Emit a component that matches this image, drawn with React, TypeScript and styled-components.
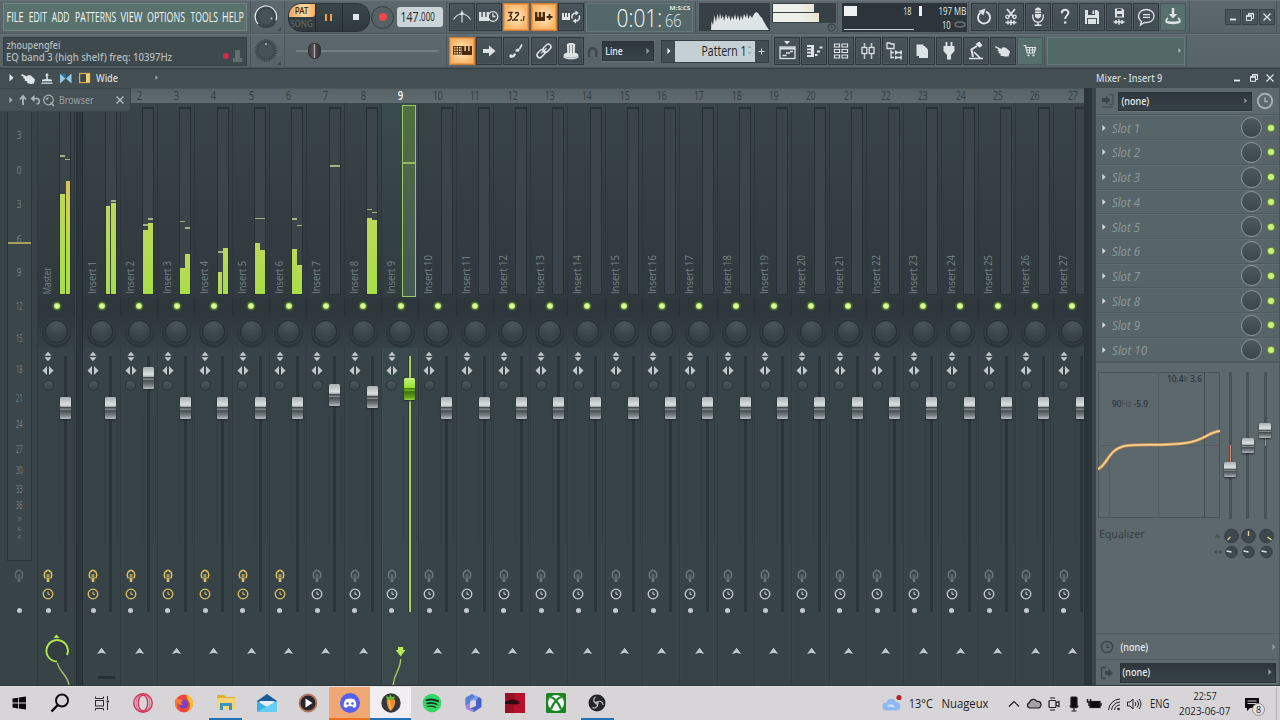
import { ReactNode, useLayoutEffect, useRef, useState } from "react";
import styled, { createGlobalStyle, css } from "styled-components";

const GlobalStyle = createGlobalStyle`
  * { box-sizing: border-box; }
  body {
    margin: 0;
    width: 1280px;
    height: 720px;
    overflow: hidden;
    background: #384347;
    font-family: "Open Sans", "Noto Sans", sans-serif;
    color: #dfe6e8;
  }
  svg { display: block; flex: none; }
`

/* ---------- text that is squeezed to a given length ---------- */

const FitBox = styled.span<{ $w: number; $vertical?: boolean }>`
  display: inline-flex;
  flex: none;
  align-items: center;
  justify-content: center;
  white-space: pre;
  ${p => p.$vertical ? css`height: ${p.$w}px; width: 12px;` : css`width: ${p.$w}px;`}
`

const FitText = styled.span<{ $vertical?: boolean }>`
  flex: none;
  display: block;
  ${p => p.$vertical && css`writing-mode: vertical-rl;`}
`

function Fit({ w, vertical, children }: { w: number; vertical?: boolean; children: ReactNode }) {
    const ref = useRef<HTMLSpanElement>(null);
    const [scale, setScale] = useState(1);
    useLayoutEffect(() => {
        if (!ref.current) return;
        const size = vertical ? ref.current.offsetHeight : ref.current.offsetWidth;
        if (size) setScale(w / size);
    }, [w, vertical, children]);
    return (
        <FitBox $w={w} $vertical={vertical}>
            <FitText
                ref={ref}
                $vertical={vertical}
                style={{ transform: vertical ? `rotate(180deg) scaleY(${scale})` : `scaleX(${scale})` }}
            >
                {children}
            </FitText>
        </FitBox>
    );
}

/* ---------- toolbar ---------- */

const Screen = styled.div`
  width: 1280px;
  height: 720px;
  display: flex;
  flex-direction: column;
`

const Bar = styled.div`
  height: 34px;
  display: flex;
  background: linear-gradient(#5d686c, #586367);
  border-top: 1px solid #68737a;
  border-bottom: 1px solid #4b565a;
`

const Section = styled.div<{ $w: number; $pl?: number; $gap?: number }>`
  width: ${p => p.$w}px;
  flex: none;
  display: flex;
  align-items: center;
  gap: ${p => p.$gap ?? 0}px;
  padding-left: ${p => p.$pl ?? 0}px;
  border-right: 1px solid #4c575b;
`

const MenuPanel = styled.div`
  width: 244px;
  height: 28px;
  padding: 0 0 1px 3px;
  display: flex;
  align-items: center;
  gap: 4.9px;
  background: #5a726e;
  border: 1px solid #6e8582;
  font-size: 14px;
  color: #f1f6f6;
`

const HintPanel = styled.div`
  width: 244px;
  height: 29px;
  padding: 0 3px 0 2px;
  display: flex;
  align-items: center;
  justify-content: space-between;
  background: #3e494d;
  border: 1px solid #353f43;
  font-family: "Noto Sans", sans-serif;
  font-size: 10.5px;
  line-height: 12px;
`

const HintLines = styled.div`
  display: flex;
  flex-direction: column;
  color: #e8eeef;
  font-weight: 500;
  span:first-child { color: #b4bdc0; }
  span + span, span + span > span { color: #e8eeef; }
`

const HintIcons = styled.div`
  display: flex;
  align-items: center;
  gap: 3px;
  padding-top: 9px;
`

const RecDot = styled.div`
  width: 6px;
  height: 6px;
  border-radius: 50%;
  background: #d3294b;
`

const Transport = styled.div`
  width: 82px;
  height: 29px;
  display: flex;
  overflow: hidden;
  border-radius: 13px;
  border: 1px solid #2a3337;
  background: linear-gradient(#3a464a, #2f393d);
`

const PatSong = styled.div`
  width: 26px;
  display: flex;
  flex-direction: column;
  font-family: "Noto Sans", sans-serif;
  font-size: 8px;
  line-height: 13px;
  text-align: center;
`

const Pat = styled.div`
  height: 13px;
  background: linear-gradient(90deg, #f1a75c, #ffd9a0 60%, #f7ae62);
  color: #2b1d0c;
  font-weight: 500;
  border-radius: 0 0 3px 0;
`

const Song = styled.div`
  color: #616c70;
`

const TransportButton = styled.div`
  flex: 1;
  display: flex;
  align-items: center;
  justify-content: center;
  border-left: 1px solid #232c2f;
`

const PauseMark = styled.div`
  width: 7px;
  height: 7px;
  border: solid #f1a04f;
  border-width: 0 2px;
`

const StopMark = styled.div`
  width: 6px;
  height: 6px;
  background: #e1e6e8;
`

const Record = styled.div`
  width: 23px;
  height: 23px;
  margin-left: 1.5px;
  border-radius: 50%;
  display: flex;
  align-items: center;
  justify-content: center;
  background: #566065;
  border: 1.5px solid #343f43;
  &::after {
    content: "";
    width: 8px;
    height: 8px;
    border-radius: 50%;
    background: #f0464f;
  }
`

const Tempo = styled.div`
  width: 46px;
  height: 20px;
  margin-left: 2.5px;
  padding: 0 0 1px 4px;
  display: flex;
  align-items: center;
  border-radius: 3px;
  background: #cbd4d7;
  color: #22292c;
  font-size: 14.5px;
  small { font-size: 12px; }
`

const ToolButton = styled.div<{ $tone?: "orange" | "teal" }>`
  width: 26px;
  height: 28px;
  flex: none;
  display: flex;
  align-items: center;
  justify-content: center;
  color: #dde3e5;
  background: linear-gradient(#48545a, #414c50);
  border: 1px solid #2e383c;
  box-shadow: inset 0 0 0 1px #4b565a;
  ${p => p.$tone === "orange" && css`
    color: #4a2a0a;
    background: radial-gradient(#ffe0b0 15%, #f9b468 75%);
    border-color: #cf7f36;
    box-shadow: inset 0 0 0 1px #f09a4c;
  `}
  ${p => p.$tone === "teal" && css`
    background: #58706d;
    border-color: #465857;
    box-shadow: none;
  `}
`

const TimePanel = styled.div`
  width: 107px;
  height: 29px;
  display: flex;
  align-items: flex-start;
  justify-content: flex-end;
  padding-right: 2px;
  background: #54686a;
  border: 1px solid #667779;
`

const TimeMain = styled.div`
  margin-right: 3px;
  font-size: 25px;
  line-height: 26px;
  font-weight: 300;
  color: #f4f8f8;
`

const TimeSide = styled.div`
  display: flex;
  flex-direction: column;
  font-size: 5.5px;
  line-height: 6px;
  font-weight: 700;
  align-items: flex-end;
  padding-top: 1px;
  div {
    font-size: 18px;
    line-height: 18px;
    font-weight: 300;
    padding-right: 8px;
  }
`

const Scope = styled.div`
  width: 71px;
  height: 28px;
  background: #374145;
`

const LevelColumn = styled.div`
  width: 64px;
  height: 29px;
  margin-left: 2px;
  display: flex;
  flex-direction: column;
  align-items: flex-end;
`

const Levels = styled.div`
  width: 64px;
  height: 20px;
  padding: 1px;
  display: flex;
  flex-direction: column;
  gap: 1px;
  background: #374145;
`

const Level = styled.div<{ $w: number }>`
  width: ${p => p.$w}px;
  height: 8.5px;
  background: linear-gradient(90deg, #eef0ea 60%, #e8e4d2);
`

const CpuPanel = styled.div`
  width: 125px;
  height: 29px;
  display: flex;
  justify-content: space-between;
  padding: 1px 1px 1px 2px;
  background: #2c3539;
  color: #e4eaec;
  font-size: 11px;
  line-height: 13px;
`

const CpuLeft = styled.div`
  width: 70px;
  height: 26px;
  display: flex;
  flex-direction: column;
  border-bottom: 1px solid #cdd4d6;
`

const CpuTop = styled.div`
  display: flex;
  justify-content: space-between;
  padding-right: 2px;
`

const CpuBlock = styled.div`
  width: 13px;
  height: 10px;
  margin-top: 2px;
  background: #eef1f2;
`

const CpuMark = styled.div`
  width: 3px;
  height: 10px;
  margin: 2px 0 0 2px;
  background: #eef1f2;
`

const CpuRight = styled.div`
  width: 42px;
  display: flex;
  flex-direction: column;
  align-items: flex-end;
`

const CpuLine = styled.div`
  display: flex;
  align-items: center;
  gap: 3px;
  margin-bottom: 1px;
`

const WindowButtons = styled.div`
  display: flex;
  gap: 1px;
  margin: 0 0 0 35px;
`

const WindowButton = styled.div`
  width: 16px;
  height: 16px;
  display: flex;
  align-items: center;
  justify-content: center;
  background: #485358;
  border: 1px solid #364145;
`

const SongSlider = styled.div`
  width: 142px;
  height: 2px;
  background: #757f82;
  position: relative;
`

const SliderThumb = styled.div`
  position: absolute;
  left: 12px;
  top: -7px;
  width: 13px;
  height: 16px;
  border-radius: 6px 6px 7px 7px;
  background: linear-gradient(90deg, #3c373b, #5a5257 40%, #b3adb0 50%, #4a4348 60%, #312e32);
  border: 1px solid #2b3033;
`

const DarkSelect = styled.div<{ $w: number; $h: number }>`
  width: ${p => p.$w}px;
  height: ${p => p.$h}px;
  padding: 0 3px 1px 2px;
  display: flex;
  align-items: center;
  justify-content: space-between;
  background: linear-gradient(#2e383c, #384347);
  border: 1px solid #2a3337;
  box-shadow: 0 1px 0 #6b7679;
  font-family: "Noto Sans", sans-serif;
  font-size: 10px;
  font-weight: 500;
  line-height: 14px;
  color: #e6ecee;
`

const PatternBox = styled.div`
  margin-left: 6px;
  height: 23px;
  display: flex;
  border: 1px solid #323d41;
`

const PatternName = styled.div`
  width: 80px;
  padding: 0 2px 2px 0;
  display: flex;
  align-items: center;
  justify-content: flex-end;
  background: #c5d0d5;
  color: #1c2326;
  font-size: 14px;
`

const PatternSide = styled.div`
  width: 13px;
  display: flex;
  align-items: center;
  justify-content: center;
  background: #434e52;
`

const TealPanel = styled.div`
  width: 138px;
  height: 28px;
  padding-right: 3px;
  display: flex;
  align-items: center;
  justify-content: flex-end;
  background: #536967;
  border: 1px solid #667b79;
`

const TinyArrow = ({ color = "#8f9a9d", size = 4 }: { color?: string; size?: number }) => (
    <svg width={size} height={size * 1.5} viewBox="0 0 4 6"><path d="M0.4 0L3.6 3L0.4 6z" fill={color} /></svg>
)

const Icon = ({ children, w = 20, h = 20 }: { children: ReactNode; w?: number; h?: number }) => (
    <svg width={w} height={h} viewBox={`0 0 ${w} ${h}`} fill="none" stroke="currentColor" strokeWidth="1.3">{children}</svg>
)

const solid = { fill: "currentColor", stroke: "none" };
const PIANO = "M0 0h2.4v5h1.4V0h2.4v5h1.4V0H10v9H0z";

const icons = {
    metronome: <Icon><path d="M1.5 12.5C4 8.500 7 7 10 7s6 1.500 8.500 5.500M10 15.500V6" strokeWidth="1.100" /><path d="M10 3l1.800 4L10 8.500 8.200 7z" {...solid} /></Icon>,
    waitInput: <Icon><path d={PIANO} transform="translate(0 5)" {...solid} /><circle cx="14" cy="9.500" r="4.800" fill="#454f54" /><path d="M14 6.500v3h2.500" /></Icon>,
    countdown: <Icon><path d="M2 5.500h4L4 9c2.500 0 2 4.500-2.500 4.500M9 6.500c1-1.500 4-1.500 3.500.500-.300 1.500-4 4-4.500 6h4" strokeWidth="1.400" /><path d="M6 12.500h1.500v1.400H6zM14.500 12.500h1.300v1.400h-1.300z" {...solid} /><path d="M18 9l-.700 5" strokeWidth="1.200" /></Icon>,
    overdub: <Icon><path d={PIANO} transform="translate(1 5)" {...solid} /><path d="M12.500 10h6M15.500 7v6" strokeWidth="1.800" /></Icon>,
    loopRecord: <Icon><path d="M1 6h2v4h1V6h2v4h1V6h2v7H1z" {...solid} /><path d="M11.500 11.500a3.600 3.600 0 0 1 4-5.300M18 8.500a3.600 3.600 0 0 1-4 5.300" strokeWidth="1.500" /><path d="M14.500 3.500l3.300 2.600-3.300 2.400zM15 11.500l-3.300 2.500 3.300 2.500z" {...solid} /></Icon>,
    undo: <Icon><path d="M6.300 5.800A6 6 0 1 0 12 4.800" strokeWidth="2" /><path d="M11.500 1.500L4.500 4l5 4.500z" {...solid} /></Icon>,
    cut: <Icon><path d="M6 2l6.500 8M14 2l-6.500 8" strokeWidth="1.800" /><circle cx="6.500" cy="9.800" r="1.700" /><circle cx="13.500" cy="9.800" r="1.700" /><path d="M4.500 15.500h11M7 13.500v4M10 12.800v5.400M13 13.500v4" strokeWidth="1.500" /></Icon>,
    mic: <Icon><rect x="7" y="0.500" width="6" height="11" rx="3" {...solid} /><path d="M7 4h6M7 6.500h6" stroke="#454f54" strokeWidth=".8" /><path d="M4.800 7.500v2.800a5.200 4.800 0 0 0 10.400 0V7.500M10 15v3M6.500 18.300h7" strokeWidth="1.400" /></Icon>,
    help: <Icon><path d="M6.800 6.200c0-4.800 6.600-4.500 6.600-.500 0 2.600-3.200 2.900-3.200 6.300" strokeWidth="2" /><circle cx="10.200" cy="15.500" r="1.300" {...solid} /></Icon>,
    save: <Icon><path d="M3 3h12l2 2v12H3z" {...solid} /><path d="M6 3h7v5H6zM5 11h10v6H5z" fill="#454f54" stroke="none" /><path d="M10.500 3.500h1.700V7h-1.700zM6 12h8v5H6z" {...solid} /></Icon>,
    saveAs: <Icon><path d="M6 1.500h7.500L15 3v7.500H6z" {...solid} /><path d="M8 2h4.500v2H8zM8 7h5v2.500H8z" fill="#454f54" stroke="none" /><path d="M4.500 15h11M7 13v4M10 12.300v5.400M13 13v4" strokeWidth="1.500" /></Icon>,
    chat: <Icon><path d="M5.500 14.500L4.500 18l4-2.600c6 .8 9.500-2.200 9.500-6.400 0-3.800-3.500-6.500-7.700-6.500S2.500 5.200 2.500 9c0 2.300 1 4.200 3 5.500z" /><path d="M7 7.700h7M7 10.300h7" /></Icon>,
    export: <Icon><path d="M8.800 1h2.400v6h3L10 11.500 5.800 7h3z" {...solid} /><path d="M5 11c-1.500 1-2 2-2 3M15 11c1.500 1 2 2 2 3" strokeWidth="1.600" /><path d="M2.500 13c4 2 11 2 15 0v2.500c-3 2.200-12 2.200-15 0z" {...solid} /></Icon>,
    typing: <Icon><path d={PIANO} transform="translate(10 5)" {...solid} /><path d="M1 5.500h8.500M1 8h8.500M1 10.500h8.500M1 13h8.500M1.500 5v8.500M4 5v8.500M6.500 5v8.500M9 5v8.500" strokeWidth=".9" /></Icon>,
    arrow: <Icon><path d="M4 8h6V4.500l6.500 5.500L10 15.500V12H4z" {...solid} /></Icon>,
    slide: <Icon><path d="M4.500 15.500c3 .500 4-1 4.500-3M9.500 9.500h3" strokeWidth="2.200" /><circle cx="5" cy="15" r="1.700" {...solid} /><circle cx="12" cy="9" r="1.600" {...solid} /><path d="M13.500 8l2.500-4.500" strokeWidth="1.600" /></Icon>,
    link: <Icon><rect x="8.500" y="4.500" width="9" height="5.400" rx="2.700" transform="rotate(-45 13 7.200)" strokeWidth="1.500" /><rect x="2.500" y="10" width="9" height="5.400" rx="2.700" transform="rotate(-45 7 12.700)" strokeWidth="1.500" /><path d="M7.500 12.300l5-5" /></Icon>,
    hat: <Icon><ellipse cx="10" cy="14" rx="7.500" ry="2.800" {...solid} /><path d="M5.800 3c2-1.500 6.400-1.500 8.400 0l-.5 10H6.300z" {...solid} /><path d="M8.500 4v8M11.500 4v8" stroke="#7b8589" strokeWidth=".9" /><path d="M2.500 15.500c3 2.800 12 2.800 15 0" strokeWidth="1.500" /></Icon>,
    playlist: <Icon><path d="M7 0h6l-3 3.500z" {...solid} /><rect x="3" y="6" width="15" height="11.500" /><path d="M3 7.500h15" strokeWidth="2" /><path d="M5.500 14.500h4M9 12h4M13 10.500h3" strokeWidth="1.600" /></Icon>,
    pianoRoll: <Icon><path d="M3 4h7v12H3v-2h4v-1.500H3v-1.800h4V9.300H3V7.500h4V6H3z" {...solid} /><path d="M11 14h2.500M13 10.500h3M15.500 6.500h3" strokeWidth="2.200" /></Icon>,
    rack: <Icon><path d="M3.500 3h5v3h-5zM3.500 8.500h5v3h-5zM3.500 14h5v3h-5zM11 3h5.500v3H11zM11 8.500h5.500v3H11zM11 14h5.500v3H11z" strokeWidth="1.200" /></Icon>,
    mixer: <Icon><path d="M6.500 2v4.500M6.500 12.500V18M13.500 2v4.500M13.500 12.500V18" strokeWidth="1.600" opacity=".8" /><rect x="4" y="6.500" width="4.800" height="6" /><rect x="11.200" y="6.500" width="4.800" height="6" /></Icon>,
    tree: <Icon><path d="M2 2h3l1 1h3v4.500H2zM6 9v8.500M6 11.500h3M6 16.500h3" /><path d="M10 9l3.500 2.500L10 14zM10 14.500l3.500 2-3.500 2z" {...solid} /><path d="M12 11.500h5M12 16.500h5M16 9.500v4M16 14.500v4" strokeWidth="1.500" /></Icon>,
    docs: <Icon><path d="M4.500 3.500h7V6h-4v9h-3z" {...solid} /><path d="M7 5h5.500L16 8.500V17H7z" {...solid} /></Icon>,
    plug: <Icon><path d="M7.500 1v4M12.500 1v4" strokeWidth="1.800" /><path d="M4.500 5h11v5l-3.500 4v4.500H8V14l-3.500-4z" {...solid} /></Icon>,
    lamp: <Icon><path d="M11 5L5.500 8.500 7 16" strokeWidth="2" /><path d="M9.500 3l4-2.500 3 4-3 2.300z" {...solid} /><path d="M3 17.500h14M8 11l6.500 6.500" strokeWidth="1.700" /></Icon>,
    hand: <Icon><path d="M2.500 5l6 3 1-1.800 3 .3 4.500 4-1.500 5h-4L7 14.500l1-1.500-2.500-1 .5-1.500-1.500-1 1-1.200-3.500-2z" {...solid} /></Icon>,
    cart: <Icon><path d="M3.500 4.500h2l1.800 7.500h7l1.200-5.500H6" strokeWidth="1.200" /><path d="M7 9h8.500M9.500 6.500V12M12.500 6.500V12" strokeWidth="1" /><circle cx="8.500" cy="14.300" r="1.100" {...solid} /><circle cx="13.500" cy="14.300" r="1.100" {...solid} /></Icon>,
}

const MasterKnob = ({ ring }: { ring?: boolean }) => (
    <svg width="33" height="32" viewBox="0 0 33 32">
        <g transform="translate(-.5 -.5)">
            <circle cx="15.5" cy="16" r="10.500" fill="#4c575b" stroke={ring ? "#384246" : "#3a4549"} strokeWidth="2" strokeDasharray={ring ? undefined : "1 1.500"} />
            {ring && <path d="M7.500 23.500A10.800 10.800 0 1 1 25.500 20" fill="none" stroke="#e5eaec" strokeWidth="1.300" />}
            <circle cx="15.500" cy="16" r="8.500" fill="#465155" stroke="#353f43" />
            <circle cx={ring ? 21 : 15.500} cy={ring ? 18 : 9.500} r=".9" fill="#c3cbce" />
        </g>
        <path d="M30 26v4h-4z" fill="#3f4a4e" />
    </svg>
)

const MinIcon = () => <svg width="10" height="10" viewBox="0 0 10 10"><path d="M2 7.500h6" stroke="#e4eaec" strokeWidth="1.800" /></svg>
const RestoreIcon = () => <svg width="10" height="10" viewBox="0 0 10 10" fill="none" stroke="#e4eaec"><path d="M3.500 3.500v-2h5v5h-2" /><rect x="1.500" y="3.800" width="5" height="4.500" /><path d="M1.500 4h5M3.500 1.700h5" strokeWidth="1.500" /></svg>
const CloseIcon = ({ color = "#e4eaec" }: { color?: string }) => <svg width="10" height="10" viewBox="0 0 10 10"><path d="M1.500 1.500l7 7M8.500 1.500l-7 7" stroke={color} strokeWidth="1.200" /></svg>

/* ---------- mixer ---------- */

const TitleBar = styled.div`
  height: 20px;
  padding-bottom: 2px;
  display: flex;
  align-items: center;
  background: #434e52;
  border-top: 1px solid #353f43;
  font-family: "Noto Sans", sans-serif;
  font-size: 10px;
  font-weight: 500;
  line-height: 14px;
  color: #d5dcde;
`

const TitleIcons = styled.div`
  width: 1096px;
  padding-left: 9px;
  display: flex;
  align-items: center;
`

const TitleButtons = styled.div`
  margin-left: 70px;
  display: flex;
  gap: 6.5px;
`

const WideLabel = styled.div`
  margin: 0 37px 0 4px;
  display: flex;
`

const MixerBody = styled.div`
  height: 598px;
  display: flex;
  position: relative;
  background: #384347;
  border-bottom: 1px solid #2e3639;
`

const BrowserTab = styled.div`
  position: absolute;
  left: 0;
  top: 0;
  width: 131px;
  height: 24px;
  padding: 0 5px 0 9px;
  display: flex;
  align-items: center;
  gap: 2px;
  background: #465156;
  border-radius: 0 0 5px 0;
  border: 1px solid #3a4549;
  border-left: none;
  font-family: "Noto Sans", sans-serif;
  font-size: 10px;
  color: #98a2a5;
`

const CloseSlot = styled.div`
  margin-left: auto;
`

const ScaleColumn = styled.div`
  width: 38px;
  flex: none;
  padding: 24px 0 0 7px;
  border-right: 1px solid #313b3f;
`

const ScaleBox = styled.div`
  width: 25px;
  height: 449px;
  display: flex;
  flex-direction: column;
  align-items: center;
  position: relative;
  padding-top: 6px;
  background: #3b464a;
  border: 1px solid #2b3539;
  border-top: none;
`

const ScaleLabel = styled.div<{ $gap: number; $small?: boolean }>`
  height: 12px;
  margin-top: ${p => p.$gap}px;
  line-height: 12px;
  color: #798386;
  font-size: ${p => p.$small ? 6 : 11}px;
`

const ScaleLine = styled.div`
  position: absolute;
  top: 130px;
  left: 0;
  width: 23px;
  height: 1.5px;
  background: #a7a05c;
`

const ScaleFoot = styled.div`
  width: 24px;
  display: flex;
  flex-direction: column;
  align-items: center;
  padding-top: 8px;
  gap: 25px;
`

const Divider = styled.div`
  width: 7.4px;
  flex: none;
  margin-left: .5px;
  background: #2d373b;
  border-left: 1px solid #293236;
  border-right: 1px solid #242d31;
`

const Strips = styled.div`
  width: 1000.8px;
  flex: none;
  display: flex;
  overflow: hidden;
`

const StripBox = styled.div<{ $selected?: boolean }>`
  flex: 0 0 37.33px;
  display: flex;
  flex-direction: column;
  background: ${p => p.$selected ? "#3a4a4c" : "#384347"};
  box-shadow: inset -1px 0 0 #323c40, inset 1px 0 0 ${p => p.$selected ? "#3e4d4f" : "#3a4549"};
`

const RulerCell = styled.div<{ $selected?: boolean }>`
  height: 15px;
  padding-bottom: 1px;
  display: flex;
  align-items: center;
  justify-content: center;
  background: linear-gradient(#566266, #616c70);
  border-top: 1px solid #4b565a;
  color: ${p => p.$selected ? "#f2f6f7" : "#333d41"};
  font-size: 12px;
  font-weight: ${p => p.$selected ? 600 : 400};
`

const MeterZone = styled.div<{ $selected?: boolean }>`
  height: 194px;
  padding: 4px 4px 2px 4px;
  display: flex;
  justify-content: space-between;
  align-items: flex-end;
  background: ${p => p.$selected
    ? "linear-gradient(#3a4b4d, #303b3e)"
    : "linear-gradient(#394448, #30393d)"};
  box-shadow: inset -1px 0 0 #2d373b;
  color: #788386;
  font-size: 11px;
  line-height: 12px;
`

const LabelSlot = styled.div`
  margin: 0 0 1px -1px;
  display: flex;
`

const MeterBox = styled.div<{ $selected?: boolean }>`
  width: 12px;
  height: 188px;
  display: flex;
  align-items: flex-end;
  justify-content: center;
  gap: .5px;
  position: relative;
  background: #3b4549;
  border: 1px solid #283135;
  border-top-width: 2px;
  ${p => p.$selected && css`
    width: 14px;
    height: 192px;
    margin: 0 -1px -2px 0;
    background: linear-gradient(#50703f, #4a6050 60%, #435a52);
    border: 1.5px solid #98c766;
  `}
`

const Channel = styled.div<{ $h: number; $hot?: boolean }>`
  width: 4.8px;
  height: ${p => p.$h}px;
  background: ${p => p.$hot ? "linear-gradient(#d9c257, #c9d551 35%, #aedb4a 60%)" : "linear-gradient(#bcd957, #a8dd48)"};
`

const Peak = styled.div<{ $top: number; $side: "l" | "r"; $wide?: boolean }>`
  position: absolute;
  top: ${p => p.$top}px;
  ${p => p.$side === "l" ? "left: 0" : "right: 0"};
  width: ${p => p.$wide ? 6 : 5}px;
  height: 1.5px;
  background: ${p => p.$wide ? "#98b860" : "#a3b183"};
`

const LedRow = styled.div`
  height: 19px;
  display: flex;
  align-items: center;
  justify-content: center;
  background: #2e383c;
  box-shadow: inset -1px 0 0 #283135;
`

const Led = styled.div`
  width: 6px;
  height: 6px;
  border-radius: 50%;
  background: radial-gradient(#e2ffab 20%, #a5e046);
  box-shadow: 0 0 0 1.5px #4c6a30;
`

const KnobRow = styled.div`
  height: 32px;
  padding-bottom: 1px;
  display: flex;
  align-items: center;
  justify-content: center;
  background: linear-gradient(#2e383c, #364145);
`

const Knob = styled.div`
  width: 23px;
  height: 23px;
  border-radius: 50%;
  background: radial-gradient(circle at 50% 15%, #4b565c, #374246 65%);
  border: 1.5px solid #232d31;
  box-shadow: 0 0 0 2px #323c40, 0 1.5px 0 3px #2b3539;
`

const FaderZone = styled.div`
  height: 272px;
  display: grid;
  grid-template-columns: 20px 15px;
`

const ControlColumn = styled.div`
  display: flex;
  flex-direction: column;
  align-items: center;
  padding-top: 3px;
`

const SepKnob = styled.div`
  width: 11px;
  height: 11px;
  margin: 5px 0 178px;
  border-radius: 50%;
  background: linear-gradient(#4c575b, #3b464a);
  border: 1.5px solid #2b3539;
`

const Dot = styled.div`
  width: 5px;
  height: 5px;
  border-radius: 50%;
  background: #c3cacc;
`

const FaderTrack = styled.div<{ $active?: boolean }>`
  width: 3px;
  height: 256px;
  margin: 8px auto 0;
  position: relative;
  background: #2b3539;
  ${p => p.$active && css`
    background: linear-gradient(90deg, #2b3539 1px, #a3cf59 1px, #a3cf59 2.5px, #2b3539 2.5px);
  `}
  &::before {
    content: "";
    position: absolute;
    top: 60px;
    left: -5px;
    width: 12px;
    height: 126px;
    border: solid #313b3f;
    border-width: 0 1px;
    opacity: .5;
  }
`

const FaderCap = styled.div<{ $active?: boolean; $small?: boolean }>`
  position: absolute;
  left: ${p => p.$small ? -4.5 : -4}px;
  width: ${p => p.$small ? 12 : 11}px;
  height: ${p => p.$small ? 15 : 22}px;
  border-radius: 1.5px;
  background: ${p => p.$active
    ? "linear-gradient(#c8f57d, #94dd2c 45%, #3f7a10 48%, #71b423 56%, #3d7411 62%, #65a51d 90%, #9ad951)"
    : "linear-gradient(#aab1b3, #dadedf 35%, #a0a6a8 45%, #394144 48%, #8b9193 56%, #464e51 62%, #7d8386 85%, #b9bec0)"};
  box-shadow: 0 1px 2px #20282b;
`

const OutputZone = styled.div`
  height: 66px;
  display: flex;
  flex-direction: column;
  align-items: center;
  position: relative;
`

const ScrollThumb = styled.div`
  position: absolute;
  left: 15px;
  bottom: 6px;
  width: 17px;
  height: 3px;
  background: #262f33;
`

type Track = {
    name: string;
    len: number;
    l?: number;
    r?: number;
    pl?: number;
    pr?: number;
    cap?: number;
    lit?: boolean;
    selected?: boolean;
}

// meter levels and peaks are given as screen heights, the meters end at 294
const levels: Record<number, Partial<Track>> = {
    1: { l: 205.500, r: 203, pr: 200, lit: true },
    2: { l: 230, r: 223, pl: 224, pr: 218, cap: 367, lit: true },
    3: { l: 268, r: 254, pl: 220.500, pr: 227, lit: true },
    4: { l: 272, r: 247.500, pl: 251, lit: true },
    5: { l: 243, r: 249.500, pl: 217.500, pr: 217.500, lit: true },
    6: { l: 248.500, r: 264.500, pl: 218, pr: 224.500, lit: true },
    7: { pl: 165, pr: 165, cap: 384 },
    8: { l: 217.500, r: 220, pl: 208.500, pr: 211.500, cap: 386 },
    9: { pl: 163, pr: 163, cap: 378, selected: true },
}

const tracks: Track[] = Array.from({ length: 27 }, (_, i) => ({
    name: `Insert ${i + 1}`,
    len: i < 9 ? 33 : 39,
    ...levels[i + 1],
}))

const master: Track = { name: "Master", len: 27, l: 194, r: 181.5, pl: 155.5, pr: 159, lit: true };

const UpDown = () => (
    <svg width="10" height="11" viewBox="0 0 10 11"><path d="M5 .8L8.500 4.700h-7zM5 10.200L1.500 6.300h7z" fill="#c3cacc" /></svg>
)

const LeftRight = () => (
    <svg width="12" height="10" viewBox="0 0 12 10"><path d="M.5 5.500L5 1v9zM11.500 5.500L7 1v9z" fill="#c3cacc" /></svg>
)

const Spacer = styled.div<{ $h: number }>`
  flex: none;
  height: ${p => p.$h}px;
`

const Plug = ({ color }: { color: string }) => (
    <svg width="10" height="14" viewBox="0 0 10 14">
        <path d="M2.500 9.500C.8 8 .8 3.500 3 2M7.500 9.500C9.200 8 9.200 3.500 7 2M3 3C3.500.8 6.500.8 7 3" fill="none" stroke={color} strokeWidth="1.500" />
        <path d="M3.500 5h3v5.500h-3z" fill={color} opacity=".65" />
        <path d="M5 9.500V13" stroke={color} strokeWidth="2.600" />
    </svg>
)

const Clock = ({ color, size = 12 }: { color: string; size?: number }) => (
    <svg width={size} height={size} viewBox="0 0 12 12" fill="none" stroke={color}>
        <circle cx="6" cy="6" r="4.800" strokeWidth="1.300" />
        <path d="M6 3.500V6.300h2" />
    </svg>
)

function Strip({ track, index }: { track: Track; index?: number }) {
    const { selected, l, r, pl, pr, lit } = track;
    const origin = selected ? 107 : 109;
    return (
        <StripBox $selected={selected}>
            <RulerCell $selected={selected}>
                {index && <Fit w={index > 9 ? 10 : 5.5}>{index}</Fit>}
            </RulerCell>
            <MeterZone $selected={selected}>
                <LabelSlot><Fit w={track.len} vertical>{track.name}</Fit></LabelSlot>
                <MeterBox $selected={selected}>
                    {l && <Channel $h={294 - l} $hot={l < 190} />}
                    {r && <Channel $h={294 - r} $hot={r < 190} />}
                    {pl && <Peak $top={pl - origin} $side="l" $wide={selected} />}
                    {pr && <Peak $top={pr - origin} $side="r" $wide={selected} />}
                </MeterBox>
            </MeterZone>
            <LedRow><Led /></LedRow>
            <KnobRow><Knob /></KnobRow>
            <FaderZone>
                <ControlColumn>
                    <UpDown />
                    <Spacer $h={3} />
                    <LeftRight />
                    <SepKnob />
                    <Plug color={lit ? "#dcc065" : "#6c777a"} />
                    <Spacer $h={5} />
                    <Clock color={lit ? "#dcc063" : "#c3cacc"} />
                    <Spacer $h={8} />
                    <Dot />
                </ControlColumn>
                <FaderTrack $active={selected}>
                    <FaderCap $active={selected} style={{ top: (track.cap ?? 397) - 356 }} />
                </FaderTrack>
            </FaderZone>
            <OutputZone>
                {index === undefined ? (
                    <svg width="37" height="66" viewBox="0 0 37 66">
                        <path d="M15.500 19l3-3.500 3 3.500z" fill="#b3e552" />
                        <circle cx="18.600" cy="32" r="10" fill="#333e42" stroke="#2a3438" strokeWidth="1" />
                        <path d="M19 42.500A10.700 10.700 0 1 1 29 36" fill="none" stroke="#b0e84f" strokeWidth="1.900" />
                        <path d="M19.500 44c1 8 10 12 11.500 22" fill="none" stroke="#a9bd6d" strokeWidth="1.400" />
                    </svg>
                ) : selected ? (
                    <svg width="37" height="66" viewBox="0 0 37 66">
                        <path d="M16 28h5.200v3h2.300L18.600 37.500l-4.900-6.500H16z" fill="#b3ec53" />
                        <path d="M18.600 40c0 11-6 13-7.500 26" fill="none" stroke="#a9cc5c" strokeWidth="1.400" />
                    </svg>
                ) : (
                    <svg width="37" height="66" viewBox="0 0 37 66"><path d="M14 35l4.600-6.200 4.600 6.200-4.600-1.300z" fill="#c3cacc" /></svg>
                )}
                {index === 1 && <ScrollThumb />}
            </OutputZone>
        </StripBox>
    );
}

const scale: [string, number][] = [
    ["3", 135], ["0", 170], ["3", 204], ["6", 239], ["9", 272], ["12", 306], ["15", 338], ["18", 369],
    ["21", 398], ["24", 424], ["27", 449], ["30", 470], ["33", 489], ["36", 505], ["39", 519], ["42", 529], ["45", 537],
]

/* ---------- right panel ---------- */

const PanelGap = styled.div`
  width: 12px;
  flex: none;
  background: #2b3539;
  border-right: 4px solid #3b464a;
`

const Panel = styled.div`
  flex: 1;
  min-width: 0;
  display: flex;
  flex-direction: column;
  background: #5d686c;
  border-right: 1px solid #4a5559;
`

const PanelHead = styled.div`
  height: 27.5px;
  display: flex;
  align-items: center;
  padding-left: 5px;
  gap: 4px;
  border-bottom: 1px solid #4d585c;
`

const Slot = styled.div`
  height: 24.7px;
  padding: 0 5.5px 0 6px;
  display: flex;
  align-items: center;
  background: #586568;
  border-top: 1px solid #616d70;
  border-bottom: 1px solid #4f5a5e;
  color: #8e9a9d;
  font-size: 13px;
  font-style: italic;
`

const SlotName = styled.div`
  flex: 1;
  padding-left: 6px;
`

const SlotKnob = styled.div`
  width: 21px;
  height: 21px;
  margin-right: 5.5px;
  border-radius: 50%;
  background: linear-gradient(#4d585c, #3c474b);
  border: 1.5px solid #8f999c;
`

const SlotLed = styled.div`
  width: 6px;
  height: 6px;
  border-radius: 50%;
  background: #c9f27f;
  box-shadow: 0 0 0 1px #6f9136;
`

const EqRow = styled.div`
  height: 157.5px;
  padding: 9px 0 0 2px;
  display: flex;
  border-top: 1px solid #4e595d;
`

const EqSliders = styled.div`
  display: flex;
  gap: 14.5px;
  margin-left: 8.5px;
`

const EqTrack = styled.div`
  width: 3px;
  height: 147px;
  position: relative;
  background: #475256;
`

const EqOffset = styled.div<{ $top: number; $h: number }>`
  position: absolute;
  left: 1px;
  top: ${p => p.$top}px;
  width: 1.5px;
  height: ${p => p.$h}px;
  background: #e5856b;
`

const EqFoot = styled.div`
  height: 113.5px;
  padding: 6px 4.5px 0 3px;
  display: flex;
  justify-content: space-between;
  align-items: flex-start;
  font-family: "Noto Sans", sans-serif;
  font-size: 11.5px;
  line-height: 16px;
  color: #343f43;
  svg { margin-top: -2px; }
`

const RouteRow = styled.div`
  height: 26px;
  padding: 0 3px 0 4px;
  display: flex;
  align-items: center;
  gap: 6.5px;
  border-top: 1px solid #505b5f;
  font-family: "Noto Sans", sans-serif;
  font-size: 10px;
  font-weight: 500;
  color: #e6ecee;
`

const Push = styled.div`
  margin-left: auto;
`

const eqBands = [
    { cap: 90, from: 73, h: 20 },
    { cap: 66, from: 0, h: 0 },
    { cap: 51, from: 60, h: 14 },
]

const EqGraph = () => (
    <svg width="122" height="146" viewBox="0 0 122 146" fill="none">
        <rect x=".5" y=".5" width="121" height="145" stroke="#495458" />
        <path d="M0 73.500h122M60.500 0v146M11.500 76v70" stroke="#535e62" />
        <path d="M106.500 0v146" stroke="#424d51" />
        <path d="M0 97C6 95 9 86 15 80C21 74 27 73.500 38 73C52 72.500 72 73.500 88 71C106 69 110 60 122 59" stroke="#d99a4e" strokeWidth="3" />
        <path d="M0 97C6 95 9 86 15 80C21 74 27 73.500 38 73C52 72.500 72 73.500 88 71C106 69 110 60 122 59" stroke="#f4d39a" strokeWidth="1.500" />
        <g fontFamily="Noto Sans" fontSize="9" fontWeight="500" fill="#2a3438">
            <text x="69" y="10" textLength="35" lengthAdjust="spacingAndGlyphs">10.4<tspan fill="#465155">k</tspan> 3.6</text>
            <text x="14" y="35" textLength="36" lengthAdjust="spacingAndGlyphs">90<tspan fill="#465155">Hz</tspan> -5.9</text>
        </g>
    </svg>
)

const EqKnobs = () => (
    <svg width="60" height="36" viewBox="0 0 60 36" fill="none">
        {[16.5, 33.5, 51.5].map((x, i) => (
            <g key={x}>
                <circle cx={x} cy="12" r="6.800" fill="#3e484c" stroke="#343e42" />
                <circle cx={x} cy="28" r="5.800" fill="#3e484c" stroke="#343e42" />
                <path d={["M-1 1L-4 4", "M0 0V-5", "M1 1L5 4"][i]} transform={`translate(${x} 12)`} stroke="#d6cf9c" strokeWidth="1.500" />
                <path d="M0 0L-5 -1" transform={`translate(${x} 28)`} stroke="#dce1e2" strokeWidth="1.400" />
            </g>
        ))}
        <path d="M0 13h5M1 11h3M0 28h7M2 26l-2 2 2 2M5 26l2 2-2 2" stroke="#3c474b" />
    </svg>
)

/* ---------- taskbar ---------- */

const Taskbar = styled.div`
  height: 34px;
  display: flex;
  background: #d8d5d8;
  border-top: 1px solid #e6e3e5;
  color: #1d1d1f;
`

const Apps = styled.div`
  display: flex;
  width: 882.5px;
  margin-left: -1.5px;
`

const AppCell = styled.div<{ $bg?: string; $line?: string; $wide?: boolean }>`
  width: 41.3px;
  flex: none;
  display: flex;
  align-items: center;
  justify-content: center;
  padding-bottom: 1px;
  background: ${p => p.$bg ?? "transparent"};
  position: relative;
  ${p => p.$line && css`
    &::after {
      content: "";
      position: absolute;
      bottom: 0;
      left: ${p.$wide ? 0 : 4}px;
      right: ${p.$wide ? 0 : 4}px;
      height: 2.5px;
      background: ${p.$line};
    }
  `}
`

const Tray = styled.div`
  flex: 1;
  display: flex;
  align-items: center;
  font-size: 12.5px;
`

const TrayIcons = styled.div`
  display: flex;
  gap: 4px;
  margin: 0 8.5px 0 17px;
`

const DateTime = styled.div`
  width: 54px;
  margin-left: 9px;
  display: flex;
  flex-direction: column;
  align-items: center;
  font-size: 11px;
  line-height: 15px;
  padding-bottom: 2px;
`

const TempText = styled.div`
  display: flex;
  gap: 8px;
  margin-left: 6px;
`

const BadgeHost = styled.div`
  margin-left: 13px;
  position: relative;
`

const Badge = styled.div`
  position: absolute;
  left: 7px;
  top: 6px;
  width: 13px;
  height: 13px;
  border-radius: 50%;
  border: 1px solid #908d90;
  background: #e2dfe1;
  font-size: 9px;
  line-height: 11px;
  text-align: center;
`

const TrayEdge = styled.div`
  width: 1px;
  height: 34px;
  margin-left: auto;
  margin-right: 3px;
  background: #b5b2b5;
`

const apps: { bg?: string; line?: string; wide?: boolean; art: ReactNode }[] = [
    { art: <path d="M3.500 5.500L9 4.700V9.600H3.500zM9.800 4.500L17 3.500v6.100H9.800zM3.500 10.400H9v5L3.500 14.600zM9.800 10.400H17v6.100l-7.200-1z" fill="#0b0b0c" /> },
    { art: <g stroke="#0b0b0c" strokeWidth="1.900" fill="none"><circle cx="12" cy="7.500" r="6" /><path d="M7.800 12L1.500 18.500" strokeWidth="2.500" /></g> },
    { art: <g stroke="#2a2a2c" fill="none"><rect x="3.500" y="7.500" width="8" height="5.500" /><path d="M3.500 3.500v2h8v-2M3.500 17.500v-2h8v2M15.500 3v4M15.500 10v7" /><path d="M14.500 8.500h2.500" strokeWidth="2" /></g> },
    { art: <g fill="none" stroke="#d0345c"><circle cx="10" cy="10" r="9.200" strokeWidth="1.500" /><ellipse cx="10" cy="10" rx="4.700" ry="8" strokeWidth="1.400" /><ellipse cx="10" cy="10" rx="7" ry="8.800" strokeWidth=".7" /></g> },
    { art: <g><circle cx="10" cy="10.500" r="9" fill="#f2443f" /><path d="M13 1c3 2 6.500 5.500 6 10-.3 4-3 7.500-7 8.300 5-3.300 5-8 2-12C12.500 5 12.500 3 13 1z" fill="#fbc02e" /><circle cx="9.500" cy="11" r="4.600" fill="#7342c8" /><path d="M1.500 6c3-1 6 .2 8 2-3 0-3 2.500-.5 3-2 2-4.500.5-5-1C2 12 3 15.500 6 17 1 15 0 10 1.500 6z" fill="#fb7a2c" /></g> },
    { line: "#2272b8", art: <g><path d="M1 2h7l2 2h9v12H1z" fill="#e3ac36" /><path d="M1 5h18v11H1z" fill="#f3d573" /><path d="M4 10h12v7h-3v-4H7v4H4z" fill="#3f94bf" /></g> },
    { art: <g><path d="M0 8L10 1l10 7v11H0z" fill="#1a5a96" /><path d="M2.500 8h15v6h-15z" fill="#e7f0f6" /><path d="M0 8l10 6 10-6v11H0z" fill="#38b1e4" /><path d="M0 19L20 8v11z" fill="#64cdf1" /></g> },
    { art: <g><circle cx="10" cy="10" r="8.500" fill="#2b2530" stroke="#b4785d" strokeWidth="1.800" /><path d="M7.500 5.500l7 4.500-7 4.500z" fill="#fff" /></g> },
    { bg: "#efa873", line: "#f0701f", wide: true, art: <g><circle cx="10" cy="10" r="10" fill="#5661e6" /><path d="M5.500 6.500c3-1.500 6-1.500 9 0 1.500 2.500 2 4.500 1.800 7-1 .9-2 1.200-3 1.300l-.9-1.500H7.600l-.9 1.500c-1-.1-2-.4-3-1.300-.2-2.500.3-4.500 1.800-7z" fill="#fff" /><circle cx="7.500" cy="10.500" r="1.300" fill="#5661e6" /><circle cx="12.500" cy="10.500" r="1.300" fill="#5661e6" /></g> },
    { bg: "#f0eef0", line: "#2272b8", wide: true, art: <g><circle cx="10" cy="10" r="9.700" fill="#34383a" /><path d="M6 6.500c2-1.500 6-1.500 8 .5 1 3-1.500 9-4.500 11-2.500-2.500-4.500-8-3.500-11.500z" fill="#f38b2a" /><path d="M8 7c.5 3 1 6 1.500 9" stroke="#fcc25c" strokeWidth="1.500" /><path d="M5 3l3 1 1.500-2.500L11 4l3-.5-1.500 4L9 6.500 6 7z" fill="#67b63b" /></g> },
    { art: <g fill="none" stroke="#17301f" strokeLinecap="round"><circle cx="10" cy="10" r="9.300" fill="#33d667" stroke="none" /><path d="M4.500 7.200c4-1.200 8-.8 11.500 1" strokeWidth="1.900" /><path d="M5 10.400c3.500-1 6.800-.6 9.800 1" strokeWidth="1.600" /><path d="M5.500 13.400c3-.7 5.500-.4 8 .9" strokeWidth="1.300" /></g> },
    { art: <g><path d="M9 1l7 3v5l-5-2-4 2v6l-5-3V5z" fill="#7f9be6" /><path d="M16 4l2.500 2v8L11 19l-5-3 7-3V7.500z" fill="#4a5fc4" /><path d="M2 8l5 3v4l4 2-1.500 2L3 16z" fill="#a486dc" /><path d="M9 1L3 4.500V12l4-2V7l5-3z" fill="#5b7fd8" /><circle cx="10" cy="10" r="2.600" fill="#d8d5e4" /></g> },
    { art: <g><path d="M0 0h20v20H0z" fill="#b8102c" /><path d="M0 9c4-3.500 9-4 15 0l-3 .8 4 1-6 .8L0 11z" fill="#2b0a12" /><path d="M0 0h10v6H0zM0 12h9v8H0z" fill="#7e1124" opacity=".6" /></g> },
    { art: <g><rect width="20" height="20" rx="1.500" fill="#1c8421" /><circle cx="10" cy="10" r="8" fill="#f3f8f3" /><path d="M4.500 4C8 4.500 13 10 15 16M15.500 4C12 4.500 7 10 5 16" stroke="#1c8421" strokeWidth="2.200" fill="none" /></g> },
    { line: "#2272b8", art: <g fill="none" stroke="#c4c2c5" strokeWidth="1.200"><circle cx="10" cy="10" r="8.500" fill="#25252a" stroke="none" /><path d="M10 10C6 10 6 5.500 8.500 4M10 10c2-3.500 6-1 6 2M10 10c2 3.500-2 6-4.500 4.500" /><circle cx="10" cy="10" r="1.200" /></g> },
]

const TrayArt = ({ children }: { children: ReactNode }) => (
    <svg width="16" height="16" viewBox="0 0 16 16" fill="none" stroke="#1d1d1f" strokeWidth="1.200">{children}</svg>
)

const menu: [string, number][] = [
    ["FILE", 17], ["EDIT", 18.5], ["ADD", 17.5], ["PATTERNS", 41], ["VIEW", 22], ["OPTIONS", 38], ["TOOLS", 27], ["HELP", 22],
]

function App() {
    return (
        <Screen>
            <GlobalStyle />
            <Bar>
                <Section $w={251} $pl={3}>
                    <MenuPanel>
                        {menu.map(([name, w]) => <Fit key={name} w={w}>{name}</Fit>)}
                    </MenuPanel>
                </Section>
                <Section $w={34}><MasterKnob ring /></Section>
                <Section $w={162} $pl={2.5}>
                    <Transport>
                        <PatSong>
                            <Pat>PAT</Pat>
                            <Song>SONG</Song>
                        </PatSong>
                        <TransportButton><PauseMark /></TransportButton>
                        <TransportButton><StopMark /></TransportButton>
                    </Transport>
                    <Record />
                    <Tempo><Fit w={18}>147</Fit><small><Fit w={16}>.000</Fit></small></Tempo>
                </Section>
                <Section $w={138} $pl={2} $gap={1.2}>
                    <ToolButton>{icons.metronome}</ToolButton>
                    <ToolButton>{icons.waitInput}</ToolButton>
                    <ToolButton $tone="orange">{icons.countdown}</ToolButton>
                    <ToolButton $tone="orange">{icons.overdub}</ToolButton>
                    <ToolButton>{icons.loopRecord}</ToolButton>
                </Section>
                <Section $w={111} $pl={1}>
                    <TimePanel>
                        <TimeMain><Fit w={46}>0:01:</Fit></TimeMain>
                        <TimeSide>
                            <Fit w={21}>M:S:CS</Fit>
                            <div><Fit w={17}>66</Fit></div>
                        </TimeSide>
                    </TimePanel>
                </Section>
                <Section $w={142} $pl={3}>
                    <Scope>
                        <svg width="71" height="28" viewBox="0 0 71 28">
                            <path d="M12 27L12.500 18L14 22L15.500 12L17 19L18.500 11L20 17L21 10L22.500 16L24 12L25 18L27 11L28.500 16L30 12L31.500 18L33 13L34.500 17L36 11L37.500 17L39 12L40.500 18L42 12L43.500 17L45 11L47 15L48 10L49.500 16L51 12L53 15L55 11L57 9L59 10L61 13L63 15L65 19L68 24L70 27z" fill="#dfe4e6" />
                        </svg>
                    </Scope>
                    <LevelColumn>
                        <Levels>
                            <Level $w={41} />
                            <Level $w={46} />
                        </Levels>
                        <Clock color="#323d41" size={9} />
                    </LevelColumn>
                </Section>
                <Section $w={131} $pl={4}>
                    <CpuPanel>
                        <CpuLeft>
                            <CpuTop>
                                <CpuBlock />
                                <Fit w={8.5}>18</Fit>
                            </CpuTop>
                        </CpuLeft>
                        <CpuMark />
                        <CpuRight>
                            <CpuLine><Fit w={28}>197 MB</Fit></CpuLine>
                            <CpuLine>
                                <Fit w={9}>10</Fit>
                                <svg width="12" height="7" viewBox="0 0 12 7"><ellipse cx="6" cy="3.500" rx="5" ry="2.500" fill="none" stroke="#6b7578" strokeWidth="1.500" /></svg>
                            </CpuLine>
                        </CpuRight>
                    </CpuPanel>
                </Section>
                <Section $w={221} $pl={2} $gap={1}>
                    <ToolButton>{icons.undo}</ToolButton>
                    <ToolButton>{icons.cut}</ToolButton>
                    <ToolButton>{icons.mic}</ToolButton>
                    <ToolButton>{icons.help}</ToolButton>
                    <ToolButton>{icons.save}</ToolButton>
                    <ToolButton>{icons.saveAs}</ToolButton>
                    <ToolButton>{icons.chat}</ToolButton>
                    <ToolButton $tone="teal">{icons.export}</ToolButton>
                </Section>
                <WindowButtons>
                    <Section $w={52} $gap={1}>
                        <WindowButton><MinIcon /></WindowButton>
                        <WindowButton><RestoreIcon /></WindowButton>
                        <WindowButton><CloseIcon /></WindowButton>
                    </Section>
                </WindowButtons>
            </Bar>
            <Bar>
                <Section $w={251} $pl={3}>
                    <HintPanel>
                        <HintLines>
                            <Fit w={54}>zhoupengfei</Fit>
                            <Fit w={166}>EQ band 3 (high shelf) freq: 10397Hz</Fit>
                        </HintLines>
                        <HintIcons>
                            <RecDot />
                            <svg width="11" height="14" viewBox="0 0 11 14"><path d="M3 1h5v8h2v4H1V9h2z" fill="#626d71" /></svg>
                        </HintIcons>
                    </HintPanel>
                </Section>
                <Section $w={34}><MasterKnob /></Section>
                <Section $w={162} $pl={11}>
                    <SongSlider><SliderThumb /></SongSlider>
                </Section>
                <Section $w={325} $pl={2} $gap={1.2}>
                    <ToolButton $tone="orange">{icons.typing}</ToolButton>
                    <ToolButton>{icons.arrow}</ToolButton>
                    <ToolButton>{icons.slide}</ToolButton>
                    <ToolButton>{icons.link}</ToolButton>
                    <ToolButton>{icons.hat}</ToolButton>
                    <svg width="16" height="16" viewBox="0 0 16 16"><path d="M4 14V9a3.700 3.700 0 0 1 7.400 0v5" fill="none" stroke="#3d484c" strokeWidth="2.400" /></svg>
                    <DarkSelect $w={52} $h={20}>
                        <Fit w={17.5}>Line</Fit>
                        <TinyArrow />
                    </DarkSelect>
                    <PatternBox>
                        <PatternSide><TinyArrow color="#e8eeef" /></PatternSide>
                        <PatternName>
                            <Fit w={45}>Pattern 1</Fit>
                            <svg width="7" height="12" viewBox="0 0 7 12"><path d="M1.500 4l2-2.500 2 2.500zM1.500 8l2 2.500 2-2.500z" fill="#9aa6ab" /></svg>
                        </PatternName>
                        <PatternSide>
                            <svg width="7" height="7" viewBox="0 0 7 7"><path d="M.5 3.500h6M3.500.5v6" stroke="#cfd6d8" /></svg>
                        </PatternSide>
                    </PatternBox>
                </Section>
                <Section $w={273} $pl={1.5} $gap={1}>
                    <ToolButton>{icons.playlist}</ToolButton>
                    <ToolButton>{icons.pianoRoll}</ToolButton>
                    <ToolButton>{icons.rack}</ToolButton>
                    <ToolButton>{icons.mixer}</ToolButton>
                    <ToolButton>{icons.tree}</ToolButton>
                    <ToolButton>{icons.docs}</ToolButton>
                    <ToolButton>{icons.plug}</ToolButton>
                    <ToolButton>{icons.lamp}</ToolButton>
                    <ToolButton>{icons.hand}</ToolButton>
                    <ToolButton $tone="teal">{icons.cart}</ToolButton>
                </Section>
                <Section $w={142} $pl={2}>
                    <TealPanel><TinyArrow color="#a5b4b2" size={3.5} /></TealPanel>
                </Section>
            </Bar>

            <TitleBar>
                <TitleIcons>
                    <TinyArrow color="#dfe6e8" size={5} />
                    <svg width="65" height="16" viewBox="0 0 65 16">
                        <path d="M8 4l5 2.500 1-1.500 3 .5 4 4-1 4-3 .5-4-1 .5-1.500-3-1 .5-1.500-2-1 .7-1.200L7 5.500z" fill="#dde4e6" />
                        <path d="M33 3l2 2.500h-1.200V9l4.200.8v1.500h-10V9.800L32.200 9V5.500H31zM27.500 12.500h11v1.200h-11z" fill="#dde4e6" />
                        <path d="M46 3.500l5.500 5-5.500 5zM57.500 3.500l-5.500 5 5.500 5z" fill="#8fc9e2" />
                        <path d="M46 3.500h6v5z" fill="#2c6d93" />
                    </svg>
                    <svg width="13" height="12" viewBox="0 0 13 12"><rect x=".6" y="1.500" width="10" height="9" fill="#3d474b" stroke="#dcae4a" strokeWidth="1.200" /><path d="M7 2h3.500v8H7z" fill="#f2cf72" /></svg>
                    <WideLabel><Fit w={22}>Wide</Fit></WideLabel>
                    <TinyArrow size={3.5} />
                </TitleIcons>
                <Fit w={66}>Mixer - Insert 9</Fit>
                <TitleButtons>
                    <MinIcon /><RestoreIcon /><CloseIcon />
                </TitleButtons>
            </TitleBar>

            <MixerBody>
                <ScaleColumn>
                    <ScaleBox>
                        {scale.map(([text, y], i) => (
                            <ScaleLabel key={y} $gap={i ? y - scale[i - 1][1] - 12 : y - 124} $small={i > 13}>
                                <Fit w={text.length > 1 ? (i > 13 ? 4 : 7) : 4.5}>{text}</Fit>
                            </ScaleLabel>
                        ))}
                        <ScaleLine />
                    </ScaleBox>
                    <ScaleFoot>
                        <Plug color="#606b6e" />
                        <Dot />
                    </ScaleFoot>
                </ScaleColumn>
                <Strip track={master} />
                <Divider />
                <Strips>
                    {tracks.map((track, i) => <Strip key={track.name} track={track} index={i + 1} />)}
                </Strips>
                <PanelGap />
                <Panel>
                    <PanelHead>
                        <svg width="13" height="16" viewBox="0 0 13 16">
                            <path d="M1 5h4V2.500L9.500 7 5 11.500V9H1z" fill="#3a4549" />
                            <path d="M8 1.500h4v10H8M1 14h11" fill="none" stroke="#465155" strokeWidth="1.300" />
                        </svg>
                        <DarkSelect $w={133.5} $h={19}>
                            <Fit w={28}>(none)</Fit>
                            <TinyArrow size={3.5} />
                        </DarkSelect>
                        <Clock color="#a5aeb1" size={18} />
                    </PanelHead>
                    {Array.from({ length: 10 }, (_, i) => (
                        <Slot key={i}>
                            <TinyArrow color="#d5dcde" />
                            <SlotName><Fit w={i === 9 ? 35 : 28}>{`Slot ${i + 1}`}</Fit></SlotName>
                            <SlotKnob />
                            <SlotLed />
                        </Slot>
                    ))}
                    <EqRow>
                        <EqGraph />
                        <EqSliders>
                            {eqBands.map(band => (
                                <EqTrack key={band.cap}>
                                    <EqOffset $top={band.from} $h={band.h} />
                                    <FaderCap $small style={{ top: band.cap }} />
                                </EqTrack>
                            ))}
                        </EqSliders>
                    </EqRow>
                    <EqFoot>
                        <Fit w={46}>Equalizer</Fit>
                        <EqKnobs />
                    </EqFoot>
                    <RouteRow>
                        <Clock color="#3b464a" size={14} />
                        <Fit w={28}>(none)</Fit>
                        <Push><TinyArrow /></Push>
                    </RouteRow>
                    <RouteRow>
                        <svg width="13" height="14" viewBox="0 0 13 14">
                            <path d="M6 1.500H2.500a1 1 0 0 0-1 1v9a1 1 0 0 0 1 1H6" fill="none" stroke="#3b464a" strokeWidth="1.400" />
                            <path d="M5 5h3.500V2.500L13 7l-4.500 4.500V9H5z" fill="#3b464a" />
                        </svg>
                        <DarkSelect $w={156} $h={20}>
                            <Fit w={28}>(none)</Fit>
                            <TinyArrow />
                        </DarkSelect>
                    </RouteRow>
                </Panel>
                <BrowserTab>
                    <TinyArrow color="#a5aeb1" size={4} />
                    <svg width="42" height="14" viewBox="0 0 42 14" fill="none" stroke="#aab3b6" strokeWidth="1.500">
                        <path d="M8 12V4M5 6.500L8 3l3 3.500" strokeWidth="1.800" />
                        <path d="M18 5.500h3.500a2.800 2.800 0 0 1 0 5.600" />
                        <path d="M19.500 2L15.500 5.500l4 3.500z" fill="#aab3b6" stroke="none" />
                        <circle cx="33.500" cy="7" r="4.800" strokeWidth="1.200" />
                        <path d="M35.500 9.500l3.500 3.500M31.500 7a2 2 0 0 1 2-2" />
                    </svg>
                    <Fit w={35}>Browser</Fit>
                    <CloseSlot><CloseIcon color="#b9c1c4" /></CloseSlot>
                </BrowserTab>
            </MixerBody>

            <Taskbar>
                <Apps>
                    {apps.map((app, i) => (
                        <AppCell key={i} $bg={app.bg} $line={app.line} $wide={app.wide}>
                            <svg width="20" height="20" viewBox="0 0 20 20">{app.art}</svg>
                        </AppCell>
                    ))}
                </Apps>
                <Tray>
                    <svg width="22" height="20" viewBox="0 0 22 20">
                        <path d="M5.500 16.500a4 4 0 0 1 0-8 5 5 0 0 1 9.500-.500 4.300 4.300 0 0 1 1 8.500z" fill="#8db9ec" />
                        <path d="M5.500 12.500C8 9 13 10 14 13.500z" fill="#c5dcf7" />
                        <circle cx="18" cy="3.500" r="2.600" fill="#b4222c" />
                    </svg>
                    <TempText>
                        <Fit w={24.5}>13°C</Fit>
                        <Fit w={47}>Nuageux</Fit>
                    </TempText>
                    <TrayIcons>
                        <TrayArt><path d="M3 10.500l5-5 5 5" /></TrayArt>
                        <TrayArt><path d="M4 12a2.700 2.700 0 0 1-.500-5.300A4 4 0 0 1 11 5.500 3.300 3.300 0 0 1 12.500 12z" fill="#a5a2a5" /></TrayArt>
                        <TrayArt><rect x="3" y="4.500" width="7" height="7" rx="1" /><path d="M10 7l3-1.500v5L10 9M4 2h5M4 14h5" /></TrayArt>
                        <TrayArt><rect x="5" y="1" width="6" height="10" rx="1" fill="#0b0b0c" /><path d="M4 9.500c0 3 8 3 8 0M8 12v3M5.500 15h5" /></TrayArt>
                        <TrayArt><rect x="4" y="5.500" width="10" height="6" fill="#0b0b0c" /><path d="M1.500 3v3h3V3M3 6v4M15 7v3" strokeWidth="1.500" /></TrayArt>
                        <TrayArt><path d="M2.500 14A12 12 0 0 1 14 3M5.500 14A9 9 0 0 1 14 6M8.500 14A6 6 0 0 1 14 9" strokeWidth="1" /><circle cx="12.500" cy="13" r="1.300" fill="#1d1d1f" stroke="none" /></TrayArt>
                        <TrayArt><path d="M1.500 6h2.500l3-3v10l-3-3H1.500zM9 6c1 1 1 3 0 4M11 4.500c2 2 2 5 0 7M13 3c2.500 3 2.500 7 0 10" strokeWidth="1" /></TrayArt>
                    </TrayIcons>
                    <Fit w={19}>ENG</Fit>
                    <DateTime>
                        <Fit w={23}>22:57</Fit>
                        <Fit w={51}>2023-06-07</Fit>
                    </DateTime>
                    <BadgeHost>
                        <svg width="14" height="14" viewBox="0 0 14 14"><path d="M0 1h14v10H5l-3 3v-3H0z" fill="#0b0b0c" /><path d="M2.500 4h9M2.500 6.500h9" stroke="#cfccce" /></svg>
                        <Badge>8</Badge>
                    </BadgeHost>
                    <TrayEdge />
                </Tray>
            </Taskbar>
        </Screen>
    );
}

export default App;
